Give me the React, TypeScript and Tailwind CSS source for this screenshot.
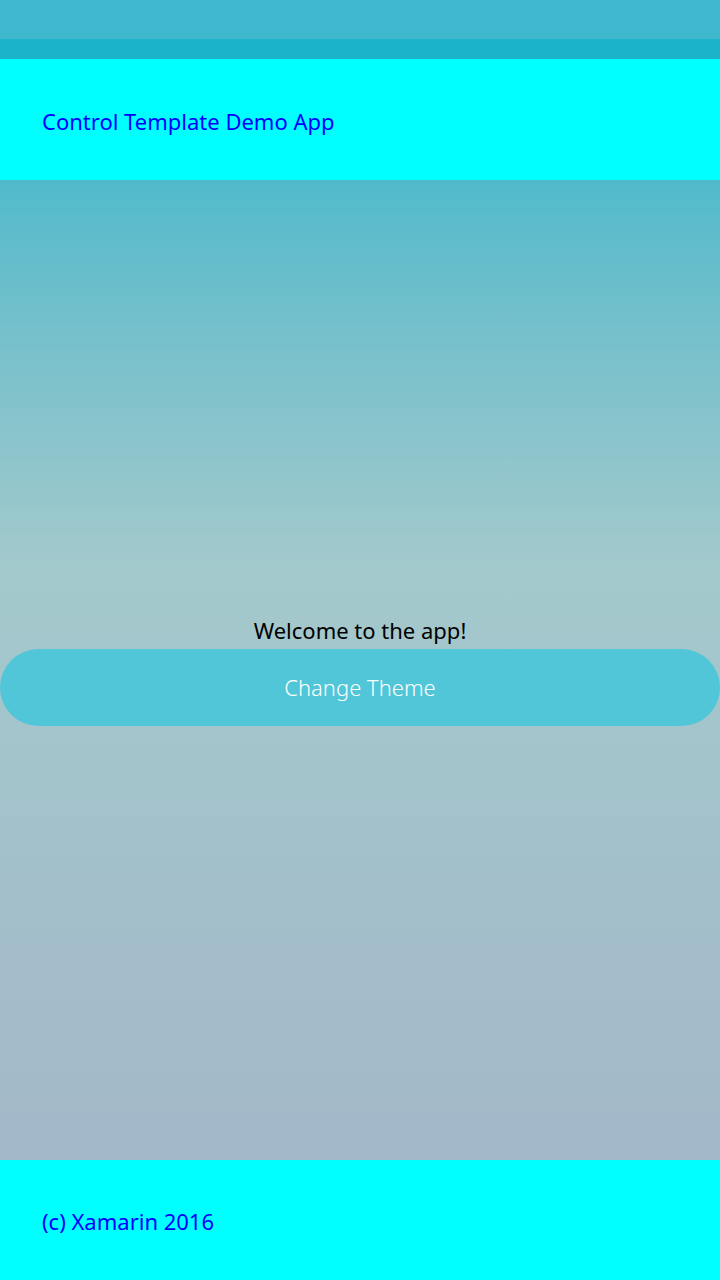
import React from 'react';

const App: React.FC = () => {
  return (
    <div className="flex h-[1280px] w-[720px] flex-col font-['Noto_Sans',sans-serif]">
      <div className="h-[39px] bg-[#3fb7cc]" />
      <div className="h-[20px] bg-[#1ab3ca]" />
      <header className="flex h-[121px] items-center bg-[#00ffff] px-[42px] pt-[3px]">
        <h1 className="text-[22px] text-[#0000ff]">Control Template Demo App</h1>
      </header>
      <main className="flex flex-1 flex-col items-center justify-center gap-[4px] bg-gradient-to-b from-[#50bacb] via-[#a3c9cc] via-40% to-[#a3b8c9]">
        <p className="text-[22px] leading-[30px] text-black">Welcome to the app!</p>
        <button className="h-[77px] w-full rounded-full bg-[#50c6d8] text-[22px] font-light text-white">
          Change Theme
        </button>
      </main>
      <footer className="flex h-[120px] items-center bg-[#00ffff] px-[42px] pt-[3px]">
        <p className="text-[22px] text-[#0000ff]">(c) Xamarin 2016</p>
      </footer>
    </div>
  );
};

export default App;
